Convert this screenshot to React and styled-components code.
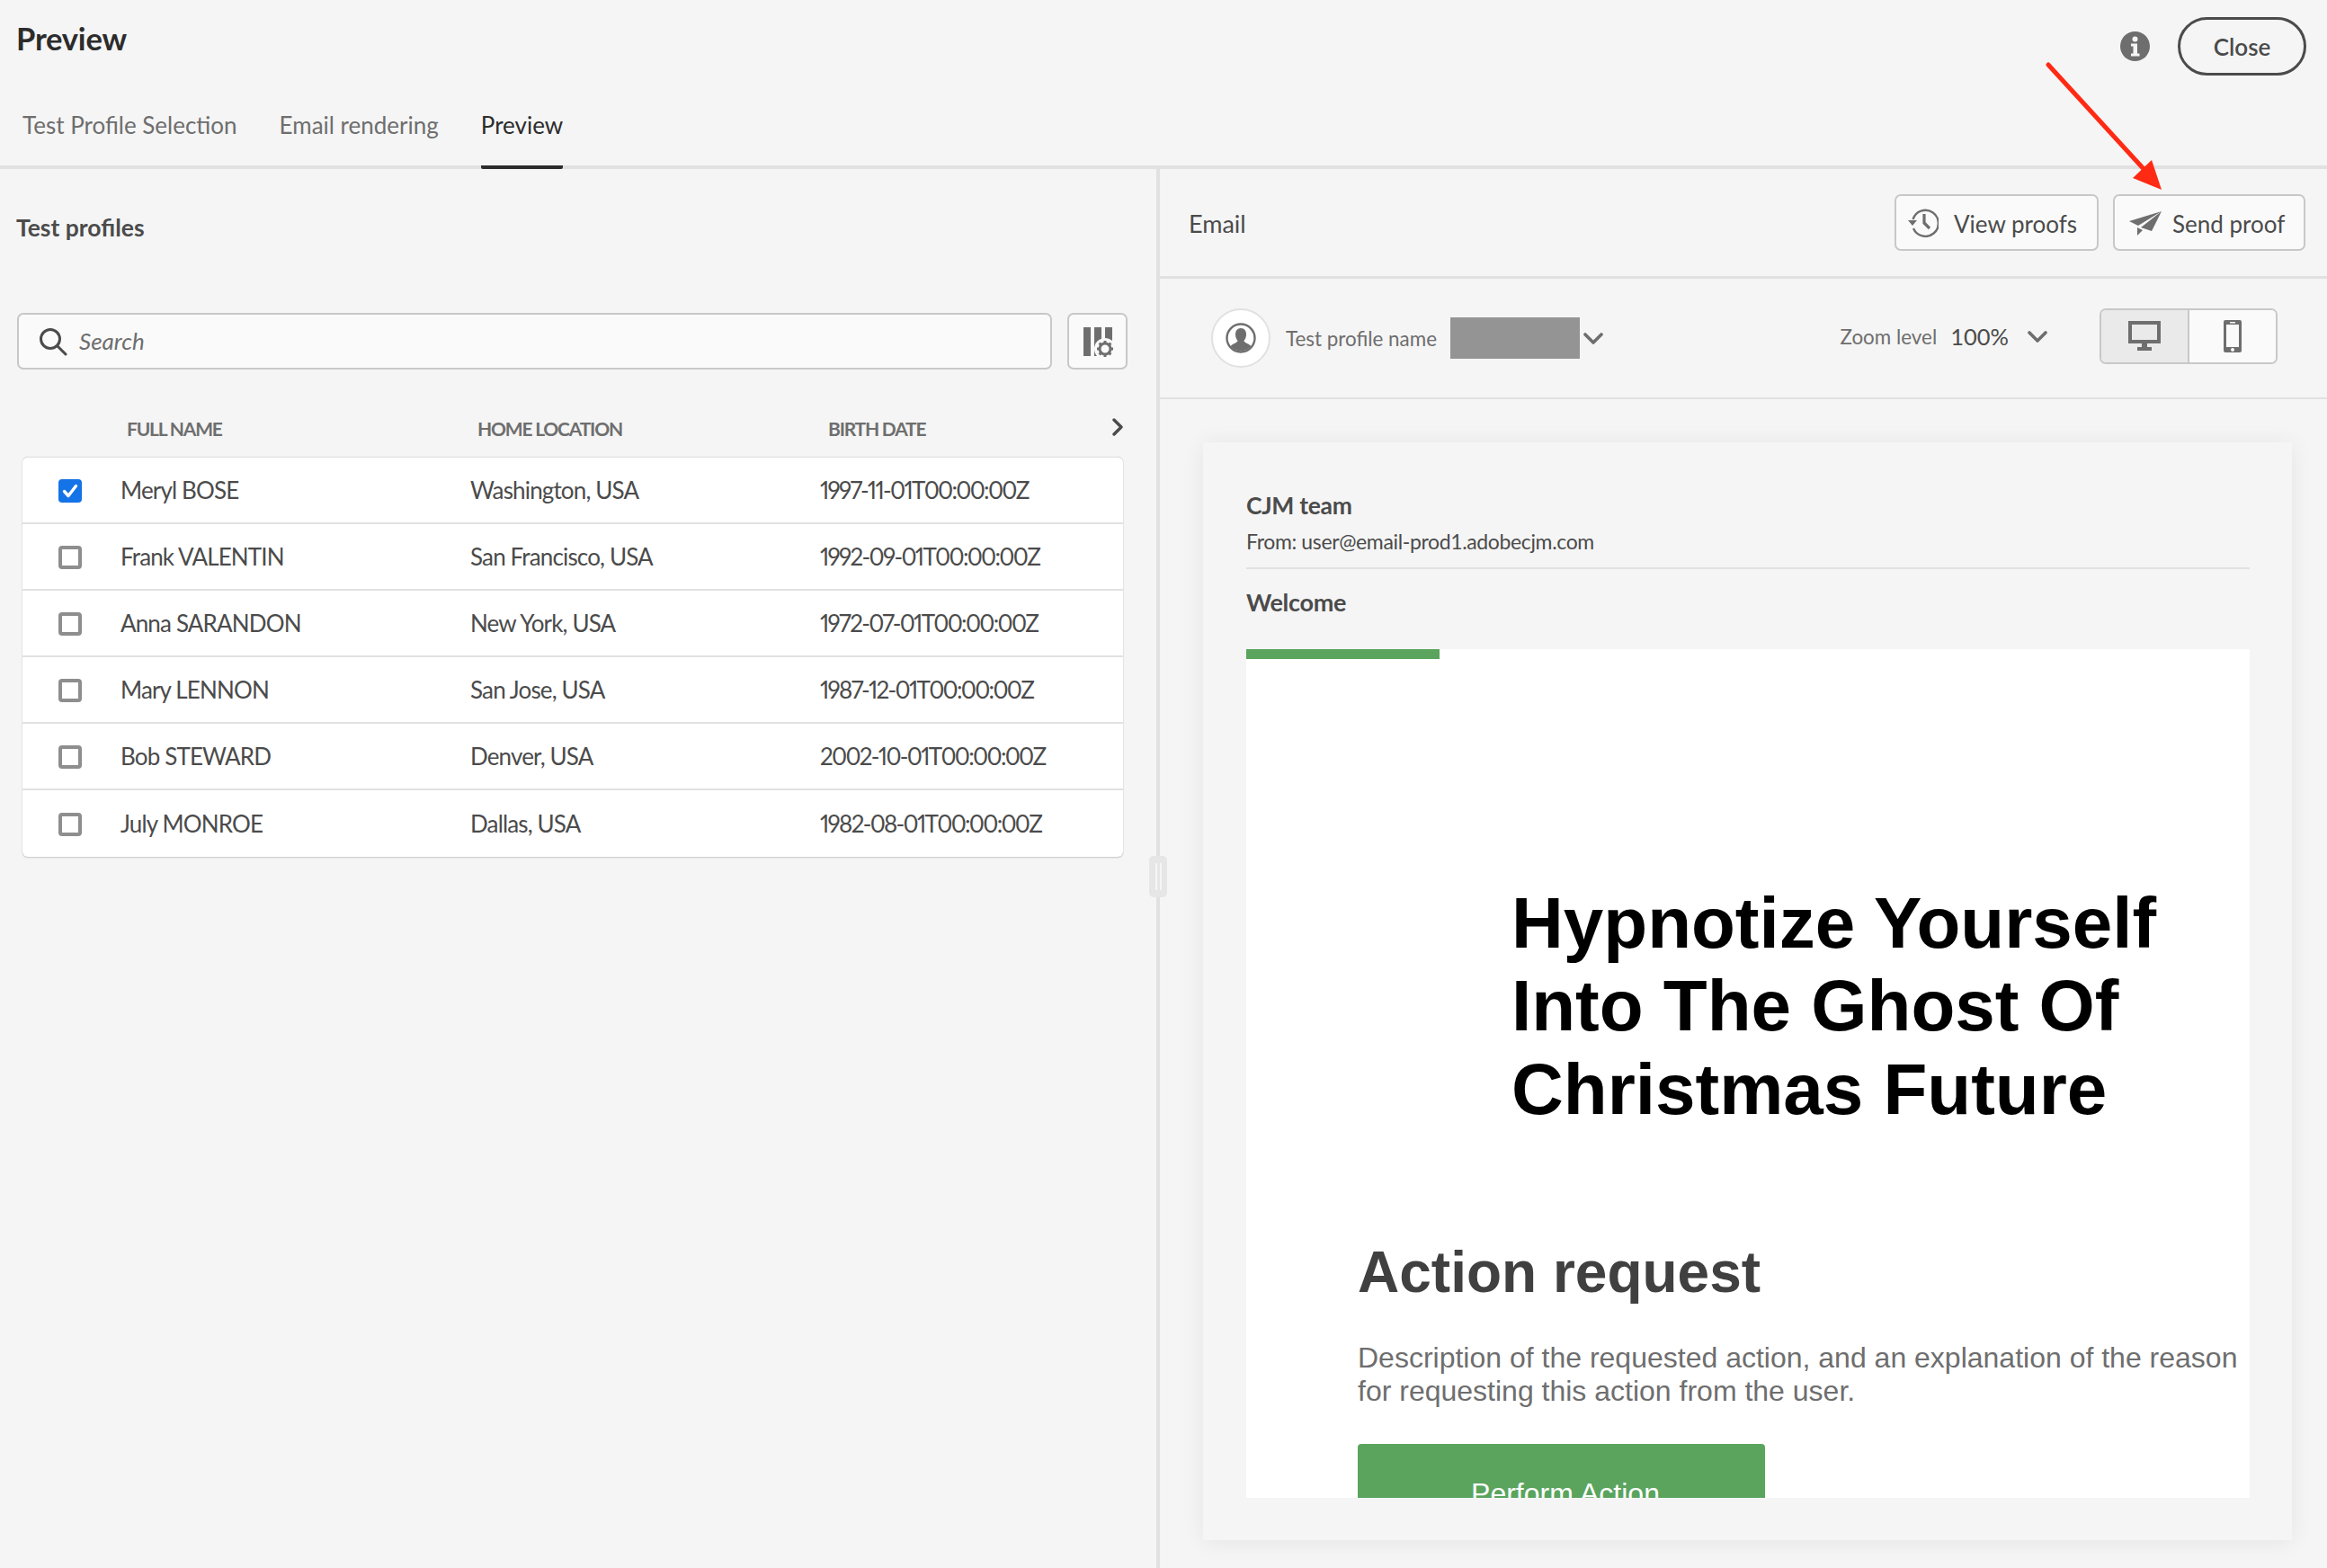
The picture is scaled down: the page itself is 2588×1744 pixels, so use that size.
import React from 'react';
import styled, { createGlobalStyle } from 'styled-components';

const Global = createGlobalStyle`
  html, body { margin: 0; padding: 0; background: #f5f5f5; }
  * { box-sizing: border-box; }
`;

const Page = styled.div`
  position: relative; width: 2588px; height: 1744px; overflow: hidden;
  display: flex; flex-direction: column; background: #f5f5f5;
  font-family: Lato, "Open Sans", sans-serif; color: #4b4b4b;
`;
const Header = styled.header`flex: none; height: 188px; display: flex; flex-direction: column;`;
const TitleRow = styled.div`
  height: 84px; padding: 19px 23px 0 18px; display: flex; justify-content: space-between; align-items: flex-start;
`;
const Title = styled.h1`margin: 0; font-size: 34.5px; line-height: 48px; font-weight: 700; color: #2c2c2c; letter-spacing: -0.2px;`;
const TopActions = styled.div`display: flex; align-items: center; gap: 31px; height: 65px;`;
const CloseButton = styled.button`
  width: 143px; height: 65px; border: 3px solid #4b4b4b; border-radius: 33px; background: transparent;
  font: 600 26px/1 Lato, sans-serif; color: #4b4b4b; padding: 0;
`;
const Tabs = styled.nav`flex: 1; display: flex; gap: 47px; padding-left: 25px; border-bottom: 4px solid #e1e1e1; align-items: flex-end;`;
const Tab = styled.div`
  height: 70px; margin-bottom: -4px; font-size: 26px; line-height: 42px;
  color: ${p => (p.$active ? '#2c2c2c' : '#6e6e6e')};
  border-bottom: 4px solid ${p => (p.$active ? '#2c2c2c' : 'transparent')};
  border-radius: 0 0 2px 2px;
`;

const Body = styled.main`flex: 1; display: flex; min-height: 0;`;
const LeftPanel = styled.section`position: relative; width: 1290px; flex: none; border-right: 4px solid #e1e1e1;`;
const PanelTitle = styled.h2`margin: 0; padding: 46px 0 0 18px; height: 160px; font-size: 26.5px; line-height: 38px; font-weight: 700; color: #4b4b4b;`;
const SearchRow = styled.div`display: flex; gap: 17px; padding-left: 19px;`;
const SearchBox = styled.div`
  width: 1151px; height: 63px; display: flex; align-items: center; gap: 13px; padding-left: 22px;
  background: #fafafa; border: 2px solid #c8c8c8; border-radius: 7px;
`;
const Placeholder = styled.span`font-size: 26px; font-style: italic; color: #6e6e6e; margin-top: -2px;`;
const IconButton = styled.button`
  width: 67px; height: 63px; padding: 0; display: flex; align-items: center; justify-content: center;
  background: #fafafa; border: 2px solid #c8c8c8; border-radius: 7px;
`;
const ColumnHead = styled.div`
  position: relative; margin: 37px 0 4px 25px; width: 1224px; height: 56px; padding-left: 116px;
  display: grid; grid-template-columns: 390px 390px 1fr; align-items: center;
  font-size: 21px; font-weight: 700; color: #6e6e6e; letter-spacing: -1.2px;
`;
const HeadChevron = styled.span`position: absolute; right: 0; top: 17px; display: flex;`;
const Table = styled.div`
  margin-left: 25px; width: 1224px; background: #fff; border-top: 1px solid #e1e1e1;
  border-radius: 6px; box-shadow: 0 1px 2px rgba(0,0,0,.18), 0 0 1px rgba(0,0,0,.18); overflow: hidden;
`;
const Row = styled.div`
  height: 74px; display: grid; grid-template-columns: 109px 389px 389px 1fr; align-items: center;
  border-bottom: 2px solid #e1e1e1; font-size: 26px; color: #4b4b4b; letter-spacing: -0.85px;
  &:last-child { border-bottom: 0; }
`;
const DateCell = styled.span`font-variant-numeric: proportional-nums; letter-spacing: -1.7px;`;
const CheckCell = styled.span`padding-left: 40px; display: flex; margin-top: 2px;`;
const Checkbox = styled.span`
  width: 26px; height: 26px; border-radius: 4px; display: flex; align-items: center; justify-content: center;
  background: ${p => (p.$checked ? '#1473e6' : '#fff')};
  border: ${p => (p.$checked ? '0' : '4px solid #8e8e8e')};
`;
const Handle = styled.div`
  position: absolute; top: 764px; right: -12px; width: 20px; height: 46px; border-radius: 5px;
  background: #e6e6e6; display: flex; justify-content: center; gap: 3px; padding: 8px 0;
  &::before, &::after { content: ''; width: 2px; background: #f5f5f5; }
`;

const RightPanel = styled.section`flex: 1; display: flex; flex-direction: column; min-width: 0;`;
const EmailBar = styled.div`
  flex: none; height: 122px; display: flex; align-items: center; gap: 16px; padding: 0 24px 0 32px;
  border-bottom: 3px solid #e1e1e1;
`;
const EmailLabel = styled.span`margin-right: auto; padding-top: 2px; font-size: 27px; color: #4b4b4b;`;
const ActionButton = styled.button`
  width: ${p => p.$w}px; height: 63px; display: flex; align-items: center; gap: ${p => p.$gap}px; padding: 0 0 0 ${p => p.$pad}px;
  background: #fafafa; border: 2px solid #c8c8c8; border-radius: 7px;
  font: 400 26px/1 Lato, sans-serif; color: #4b4b4b;
`;
const ButtonText = styled.span`padding-top: 2px;`;
const ProfileBar = styled.div`
  flex: none; height: 134px; display: flex; align-items: center; padding: 0 55px 0 57px;
  border-bottom: 2px solid #e1e1e1;
`;
const Avatar = styled.div`
  width: 66px; height: 66px; border-radius: 50%; background: #fff; border: 2px solid #e1e1e1;
  display: flex; align-items: center; justify-content: center; margin-right: 17px;
`;
const FieldLabel = styled.span`font-size: 22.4px; color: #6e6e6e;`;
const Redacted = styled.div`width: 144px; height: 46px; background: #949494; margin: 0 4px 0 15px;`;
const ZoomGroup = styled.div`margin-left: auto; display: flex; align-items: center; height: 62px; margin-top: -4px;`;
const ZoomValue = styled.span`margin-left: 15px; margin-right: 21px; font-size: 25.5px; color: #4b4b4b;`;
const Segmented = styled.div`
  margin-left: 58px; width: 198px; height: 62px; display: flex; border: 2px solid #c8c8c8; border-radius: 7px; overflow: hidden; background: #fafafa;
`;
const Segment = styled.div`
  flex: 1; display: flex; align-items: center; justify-content: center;
  background: ${p => (p.$on ? '#eaeaea' : '#fafafa')};
  & + & { border-left: 2px solid #c8c8c8; }
`;
const PreviewArea = styled.div`flex: 1; min-height: 0; padding: 48px 39px 31px 48px; display: flex;`;
const EmailCard = styled.article`
  flex: 1; min-width: 0; display: flex; flex-direction: column; padding: 50px 47px 47px 48px;
  background: #f5f5f5; box-shadow: 0 2px 24px rgba(0,0,0,.07);
`;
const Sender = styled.div`font-size: 26.5px; line-height: 40px; font-weight: 700; color: #4b4b4b; letter-spacing: -0.3px;`;
const FromLine = styled.div`
  font-size: 23px; line-height: 40px; color: #4b4b4b; padding-bottom: 9px; border-bottom: 2px solid #e1e1e1; letter-spacing: -0.36px;
`;
const Subject = styled.div`font-size: 27px; line-height: 74px; font-weight: 700; color: #4b4b4b; margin-bottom: 15px; letter-spacing: -0.3px;`;
const Frame = styled.div`flex: 1; min-height: 0; overflow: hidden; background: #fff; font-family: "Liberation Sans", Arial, sans-serif;`;
const GreenBar = styled.div`width: 215px; height: 11px; background: #5aa45e;`;
const Hero = styled.h1`margin: 248px 0 0 295px; font-size: 80px; line-height: 92.4px; font-weight: 700; color: #000;`;
const ActionTitle = styled.h2`margin: 118px 0 0 124px; font-size: 64px; line-height: 78px; font-weight: 700; color: #404040;`;
const Description = styled.p`margin: 38px 0 0 124px; width: 1000px; font-size: 32px; line-height: 37px; color: #6e6e6e;`;
const PerformAction = styled.div`
  margin: 40px 0 0 124px; width: 453px; height: 120px; padding: 35px 0 0 9px; border-radius: 4px; background: #5aa45e; color: #fff;
  font-size: 32px; line-height: 40px; text-align: center;
`;
const Arrow = styled.svg`position: absolute; left: 2270px; top: 60px;`;

const Chevron = ({ w = 22, h = 13, c = '#6e6e6e' }) => (
  <svg width={w} height={h} viewBox="0 0 22 13" fill="none"><path d="M2 2l9 9 9-9" stroke={c} strokeWidth="3.6" strokeLinecap="round" strokeLinejoin="round" /></svg>
);
const SearchIcon = () => (
  <svg width="32" height="32" viewBox="0 0 32 32" fill="none" stroke="#4b4b4b" strokeWidth="3"><circle cx="13" cy="13" r="10.5" /><path d="M21 21l9 9" strokeLinecap="round" /></svg>
);
const ColumnsIcon = () => (
  <svg width="36" height="36" viewBox="0 0 36 36">
    <path fill="#6e6e6e" d="M2 2h8v32H2zM14 2h8v32h-8zM26 2h8v32h-8z" />
    <circle cx="26" cy="26" r="12" fill="#fafafa" />
    <circle cx="26" cy="26" r="6" fill="none" stroke="#6e6e6e" strokeWidth="3" />
    <path stroke="#6e6e6e" strokeWidth="3" d="M26 17v4M26 31v4M17 26h4M31 26h4M19.600 19.600l3 3M29.400 29.400l3 3M19.600 32.400l3-3M29.400 22.600l3-3" />
  </svg>
);
const InfoIcon = () => (
  <svg width="33" height="33" viewBox="0 0 33 33"><circle cx="16.5" cy="16.5" r="16.5" fill="#6e6e6e" /><circle cx="16.5" cy="8.5" r="3" fill="#f5f5f5" /><path fill="#f5f5f5" d="M12 13.500h7v11h2.500v3h-9.500v-3h2.500v-8h-2.500z" /></svg>
);
const HistoryIcon = () => (
  <svg width="34" height="32" viewBox="0 0 34 32" fill="none" stroke="#6e6e6e"><path strokeWidth="2.400" d="M5.500 12A14.500 14.500 0 1 1 6 22" /><path fill="#6e6e6e" stroke="none" d="M0 13h10l-5 6z" /><path strokeWidth="3.200" d="M18 6v10l6 6" /></svg>
);
const PlaneIcon = () => (
  <svg width="36" height="30" viewBox="0 0 36 30" fill="#6e6e6e"><path d="M36 2L0 13l10 5z" /><path d="M36 2L13 20l12 4z" /><path d="M9 20v9l6-6z" /></svg>
);
const DesktopIcon = () => (
  <svg width="36" height="34" viewBox="0 0 36 34" fill="#6e6e6e"><path fillRule="evenodd" d="M0 0h36v25H0zM4 4v17h28V4z" /><path d="M15 25h6v4h-6zM10 29h16v4H10z" /></svg>
);
const PhoneIcon = () => (
  <svg width="20" height="36" viewBox="0 0 20 36" fill="#6e6e6e"><path fillRule="evenodd" d="M2 0h16a2 2 0 0 1 2 2v32a2 2 0 0 1-2 2H2a2 2 0 0 1-2-2V2a2 2 0 0 1 2-2zM3 5v25h14V5zM7 2v1.600h6V2zM10 31a2 2 0 1 0 0 4 2 2 0 0 0 0-4z" /></svg>
);
const PersonIcon = () => (
  <svg width="34" height="34" viewBox="0 0 34 34">
    <circle cx="17" cy="17" r="15.500" fill="none" stroke="#6e6e6e" strokeWidth="2.400" />
    <path fill="#6e6e6e" d="M17 6c4 0 6 3 6 7 0 3-1 5-2.500 7 0 2 5 3 8 6a15 15 0 0 1-23 0c3-3 8-4 8-6-1.500-2-2.500-4-2.500-7 0-4 2-7 6-7z" />
  </svg>
);

const people = [
  ['Meryl BOSE', 'Washington, USA', '1997-11-01T00:00:00Z', true],
  ['Frank VALENTIN', 'San Francisco, USA', '1992-09-01T00:00:00Z'],
  ['Anna SARANDON', 'New York, USA', '1972-07-01T00:00:00Z'],
  ['Mary LENNON', 'San Jose, USA', '1987-12-01T00:00:00Z'],
  ['Bob STEWARD', 'Denver, USA', '2002-10-01T00:00:00Z'],
  ['July MONROE', 'Dallas, USA', '1982-08-01T00:00:00Z'],
];

export default function App() {
  return (
    <Page>
      <Global />
      <Header>
        <TitleRow>
          <Title>Preview</Title>
          <TopActions><InfoIcon /><CloseButton>Close</CloseButton></TopActions>
        </TitleRow>
        <Tabs>
          <Tab>Test Profile Selection</Tab>
          <Tab>Email rendering</Tab>
          <Tab $active>Preview</Tab>
        </Tabs>
      </Header>
      <Body>
        <LeftPanel>
          <PanelTitle>Test profiles</PanelTitle>
          <SearchRow>
            <SearchBox><SearchIcon /><Placeholder>Search</Placeholder></SearchBox>
            <IconButton><ColumnsIcon /></IconButton>
          </SearchRow>
          <ColumnHead>
            <span>FULL NAME</span><span>HOME LOCATION</span><span>BIRTH DATE</span>
            <HeadChevron>
              <svg width="12" height="20" viewBox="0 0 12 20" fill="none"><path d="M2 2l8 8-8 8" stroke="#4b4b4b" strokeWidth="3.400" strokeLinecap="round" strokeLinejoin="round" /></svg>
            </HeadChevron>
          </ColumnHead>
          <Table>
            {people.map(([name, place, date, checked]) => (
              <Row key={name}>
                <CheckCell>
                  <Checkbox $checked={checked}>
                    {checked && <svg width="18" height="16" viewBox="0 0 18 16" fill="none"><path d="M2.500 8.500l4.500 5 8.500-11" stroke="#fff" strokeWidth="3.400" strokeLinecap="round" strokeLinejoin="round" /></svg>}
                  </Checkbox>
                </CheckCell>
                <span>{name}</span><span>{place}</span><DateCell>{date}</DateCell>
              </Row>
            ))}
          </Table>
          <Handle />
        </LeftPanel>
        <RightPanel>
          <EmailBar>
            <EmailLabel>Email</EmailLabel>
            <ActionButton $w={227} $pad={13} $gap={17}><HistoryIcon /><ButtonText>View proofs</ButtonText></ActionButton>
            <ActionButton $w={214} $pad={16} $gap={12}><PlaneIcon /><ButtonText>Send proof</ButtonText></ActionButton>
          </EmailBar>
          <ProfileBar>
            <Avatar><PersonIcon /></Avatar>
            <FieldLabel>Test profile name</FieldLabel>
            <Redacted />
            <Chevron />
            <ZoomGroup>
              <FieldLabel>Zoom level</FieldLabel>
              <ZoomValue>100%</ZoomValue>
              <Chevron />
              <Segmented>
                <Segment $on><DesktopIcon /></Segment>
                <Segment><PhoneIcon /></Segment>
              </Segmented>
            </ZoomGroup>
          </ProfileBar>
          <PreviewArea>
            <EmailCard>
              <Sender>CJM team</Sender>
              <FromLine>From: user@email-prod1.adobecjm.com</FromLine>
              <Subject>Welcome</Subject>
              <Frame>
                <GreenBar />
                <Hero>Hypnotize Yourself<br />Into The Ghost Of<br />Christmas Future</Hero>
                <ActionTitle>Action request</ActionTitle>
                <Description>Description of the requested action, and an explanation of the reason for requesting this action from the user.</Description>
                <PerformAction>Perform Action</PerformAction>
              </Frame>
            </EmailCard>
          </PreviewArea>
        </RightPanel>
      </Body>
      <Arrow width="150" height="160" viewBox="0 0 150 160">
        <path d="M8 12L116 130" stroke="#ff2a14" strokeWidth="5" strokeLinecap="round" />
        <path fill="#ff2a14" d="M123 118L102 138 134 151z" />
      </Arrow>
    </Page>
  );
}
